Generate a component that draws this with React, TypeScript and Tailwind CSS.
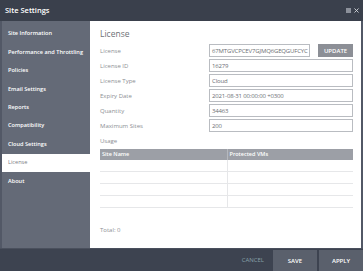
import { X } from 'lucide-react'

const navItems = [
  'Site Information',
  'Performance and Throttling',
  'Policies',
  'Email Settings',
  'Reports',
  'Compatibility',
  'Cloud Settings',
  'License',
  'About',
]

const fields = [
  { label: 'License ID', value: '16279' },
  { label: 'License Type', value: 'Cloud' },
  { label: 'Expiry Date', value: '2021-08-31 00:00:00 +0300' },
  { label: 'Quantity', value: '34463' },
  { label: 'Maximum Sites', value: '200' },
]

function Field({ value }: { value: string }) {
  return (
    <div className="flex h-[13px] items-center overflow-hidden whitespace-nowrap border border-[#b9bcc1] bg-white px-[2px] text-[6px] leading-none tracking-[-0.15px] text-[#6b6e73]">
      {value}
    </div>
  )
}

export default function App() {
  return (
    <div
      className="flex h-[271px] w-[363px] flex-col bg-[#3d4350]"
      style={{ fontFamily: '"Open Sans", "Noto Sans", sans-serif' }}
    >
      {/* title bar */}
      <div className="flex h-[21px] shrink-0 items-center justify-between bg-[#3a404c] pl-[5px] pr-[3px]">
        <span className="text-[7.5px] font-semibold text-white">Site Settings</span>
        <div className="flex items-center gap-[2px]">
          <span className="h-[5px] w-[5px] bg-[#8b909a]" />
          <X className="h-[7px] w-[7px] text-[#d8dbe0]" strokeWidth={3} />
        </div>
      </div>

      <div className="flex h-[227px] shrink-0 border-x-2 border-[#525866]">
        {/* sidebar */}
        <div className="w-[88px] shrink-0 bg-[#646a77] pt-[4px]">
          {navItems.map((item) => (
            <div
              key={item}
              className={`flex h-[18.4px] items-center whitespace-nowrap pl-[6px] text-[5.6px] leading-none ${
                item === 'License'
                  ? 'bg-white font-normal text-[#7b7e84]'
                  : 'font-semibold text-white'
              }`}
            >
              {item}
            </div>
          ))}
        </div>

        {/* content */}
        <div className="flex min-w-0 flex-1 flex-col bg-white pl-[10px] pr-[8px] pt-[4px]">
          <div className="flex h-[18.4px] items-center text-[8.5px] leading-none text-[#6e7176]">License</div>

          <div className="mt-[1px] flex flex-col gap-[2px]">
            <div className="flex h-[13px] items-center">
              <span className="w-[109px] shrink-0 text-[6px] leading-none text-[#8b8e93]">License</span>
              <div className="flex min-w-0 flex-1 gap-[8px]">
                <div className="min-w-0 flex-1">
                  <Field value="67MTGVCPCEV7GJMQ6GEQGUFCYC" />
                </div>
                <button className="flex h-[13px] w-[35px] shrink-0 items-center justify-center bg-[#8c8f96] text-[6px] font-semibold leading-none text-white">
                  UPDATE
                </button>
              </div>
            </div>
            {fields.map((f) => (
              <div key={f.label} className="flex h-[13px] items-center">
                <span className="w-[109px] shrink-0 text-[6px] leading-none text-[#8b8e93]">{f.label}</span>
                <div className="min-w-0 flex-1">
                  <Field value={f.value} />
                </div>
              </div>
            ))}
            <div className="flex h-[13px] items-center text-[6px] leading-none text-[#8b8e93]">Usage</div>
          </div>

          {/* usage table */}
          <div className="mt-[2px] grid grid-cols-2">
            <div className="flex h-[11px] items-center bg-[#9c9fa6] pl-[2px] text-[5.5px] font-semibold leading-none text-white">
              Site Name
            </div>
            <div className="flex h-[11px] items-center border-l border-[#b5b8be] bg-[#9c9fa6] pl-[2px] text-[5.5px] font-semibold leading-none text-white">
              Protected VMs
            </div>
            {[0, 1, 2, 3].map((r) => (
              <div key={r} className="col-span-2 grid h-[12px] grid-cols-2 border-b border-[#e6e7e9]">
                <div />
                <div className="border-l border-[#e6e7e9]" />
              </div>
            ))}
          </div>

          <div className="mt-[19px] text-[6px] leading-none text-[#8b8e93]">Total: 0</div>
        </div>
      </div>

      {/* footer */}
      <div className="flex flex-1 items-end justify-end border-t border-[#4a505d]">
        <span className="mb-[8px] mr-[9px] text-[6px] leading-none text-[#86a0a8]">CANCEL</span>
        <button className="flex h-[21px] w-[44px] items-center justify-center bg-[#5a606c] text-[6px] font-semibold leading-none text-white">
          SAVE
        </button>
        <button className="ml-[2px] flex h-[21px] w-[44px] items-center justify-center bg-[#5a606c] text-[6px] font-semibold leading-none text-white">
          APPLY
        </button>
      </div>
    </div>
  )
}
